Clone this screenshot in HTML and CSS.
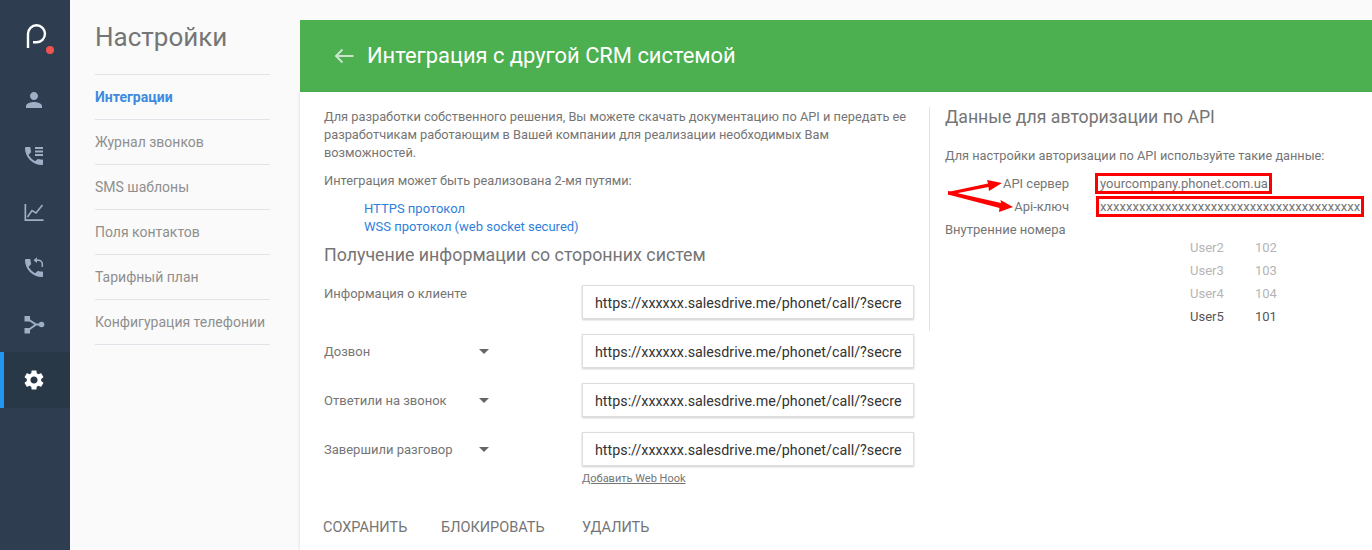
FILE: index.html
```html
<!DOCTYPE html>
<html lang="ru">
<head>
<meta charset="utf-8">
<title>Интеграция с другой CRM системой</title>
<link rel="stylesheet" href="styles.css">
</head>
<body>
<div class="app">
  <nav class="rail">
    <div class="logo">
      <svg width="29" height="31" viewBox="0 0 29 31"><path d="M2 24V9.800A8.500 8.500 0 1 1 10.500 18.300H7" fill="none" stroke="#fff" stroke-width="2.400"/><circle cx="24" cy="26" r="4" fill="#ef5350"/></svg>
    </div>
    <a class="rail-item"><svg class="ico" viewBox="0 0 24 24"><path d="M12 12c2.210 0 4-1.790 4-4s-1.790-4-4-4-4 1.790-4 4 1.790 4 4 4zm0 2c-2.670 0-8 1.340-8 4v2h16v-2c0-2.660-5.330-4-8-4z"/></svg></a>
    <a class="rail-item"><svg class="ico" viewBox="0 0 24 24"><path d="M20 15.500c-1.250 0-2.450-.2-3.570-.57-.35-.11-.74-.03-1.020.24l-2.200 2.200c-2.830-1.440-5.150-3.750-6.590-6.590l2.200-2.210c.28-.26.36-.65.25-1C8.700 6.450 8.500 5.250 8.500 4c0-.55-.45-1-1-1H4c-.55 0-1 .45-1 1 0 9.390 7.610 17 17 17 .55 0 1-.45 1-1v-3.500c0-.55-.45-1-1-1z"/><path d="M13 3h8v2h-8zM13 6.500h8v2h-8zM13 10h8v2h-8z"/></svg></a>
    <a class="rail-item"><svg class="ico" viewBox="0 0 24 24"><path d="M2.500 4h1.700v15.300h17.300V21H2.500z"/><path d="M5.500 17l4.500-6.500 4 2.500 6.500-8" fill="none" stroke="#9fb0c6" stroke-width="1.600"/></svg></a>
    <a class="rail-item"><svg class="ico" viewBox="0 0 24 24"><path d="M20 15.500c-1.250 0-2.450-.2-3.570-.57-.35-.11-.74-.03-1.020.24l-2.200 2.200c-2.830-1.440-5.150-3.750-6.590-6.590l2.200-2.210c.28-.26.36-.65.25-1C8.700 6.450 8.500 5.250 8.500 4c0-.55-.45-1-1-1H4c-.55 0-1 .45-1 1 0 9.390 7.610 17 17 17 .55 0 1-.45 1-1v-3.500c0-.55-.45-1-1-1z"/><path d="M14 4.200h2.500a3.800 3.800 0 0 1 3.800 3.800v3" fill="none" stroke="#9fb0c6" stroke-width="1.500"/><path d="M11.500 4.200l3.500-2.900v5.800z"/></svg></a>
    <a class="rail-item"><svg class="ico" viewBox="0 0 24 24"><path d="M2.500 4h5.500v5.500H2.500zM2.500 16H8v5.500H2.500z"/><circle cx="19.500" cy="12.500" r="2.800"/><path d="M5 6.500l9 6H19M5 19l9-6.500" fill="none" stroke="#9fb0c6" stroke-width="2"/></svg></a>
    <a class="rail-item active"><svg class="ico" viewBox="0 0 24 24"><path d="M19.140 12.940c.04-.3.06-.61.06-.94 0-.32-.02-.64-.07-.94l2.030-1.580c.18-.14.23-.41.12-.61l-1.920-3.320c-.12-.22-.37-.29-.59-.22l-2.390.96c-.5-.38-1.030-.7-1.620-.94l-.36-2.540c-.04-.24-.24-.41-.48-.41h-3.840c-.24 0-.43.17-.47.41l-.36 2.540c-.59.24-1.130.57-1.620.94l-2.390-.96c-.22-.08-.47 0-.59.22L2.740 8.870c-.12.21-.08.47.12.61l2.030 1.580c-.05.3-.09.63-.09.94s.02.64.07.94l-2.030 1.580c-.18.14-.23.41-.12.61l1.920 3.320c.12.22.37.29.59.22l2.390-.96c.5.38 1.030.7 1.620.94l.36 2.540c.05.24.24.41.48.41h3.840c.24 0 .44-.17.47-.41l.36-2.540c.59-.24 1.130-.56 1.620-.94l2.390.96c.22.08.47 0 .59-.22l1.920-3.320c.12-.22.07-.47-.12-.61l-2.010-1.580zM12 15.600c-1.980 0-3.600-1.620-3.600-3.600s1.620-3.600 3.600-3.600 3.600 1.620 3.600 3.600-1.620 3.600-3.600 3.600z"/></svg></a>
  </nav>

  <aside class="side">
    <h1 class="side-title">Настройки</h1>
    <ul class="side-nav">
      <li class="current">Интеграции</li>
      <li>Журнал звонков</li>
      <li>SMS шаблоны</li>
      <li>Поля контактов</li>
      <li>Тарифный план</li>
      <li>Конфигурация телефонии</li>
    </ul>
  </aside>

  <main class="main">
    <header class="banner">
      <svg class="back" width="20" height="16" viewBox="0 0 20 16"><path d="M19.500 8H2M8.500 1.500L2 8l6.500 6.500" fill="none" stroke="#c9e6ca" stroke-width="2"/></svg>
      <h2 class="banner-title">Интеграция с другой CRM системой</h2>
    </header>
    <div class="content">
      <section class="left">
        <p class="para">Для разработки собственного решения, Вы можете скачать документацию по API и передать ее разработчикам работающим в Вашей компании для реализации необходимых Вам возможностей.</p>
        <p class="para para-second">Интеграция может быть реализована 2-мя путями:</p>
        <div class="links">
          <a>HTTPS протокол</a>
          <a>WSS протокол (web socket secured)</a>
        </div>
        <h3 class="sub">Получение информации со сторонних систем</h3>
        <div class="form">
          <div class="row row-top">
            <span class="label">Информация о клиенте</span>
            <div class="field">https://xxxxxx.salesdrive.me/phonet/call/?secre</div>
          </div>
          <div class="row">
            <span class="label">Дозвон<i class="caret"></i></span>
            <div class="field">https://xxxxxx.salesdrive.me/phonet/call/?secre</div>
          </div>
          <div class="row">
            <span class="label">Ответили на звонок<i class="caret"></i></span>
            <div class="field">https://xxxxxx.salesdrive.me/phonet/call/?secre</div>
          </div>
          <div class="row row-last">
            <span class="label">Завершили разговор<i class="caret"></i></span>
            <div class="field">https://xxxxxx.salesdrive.me/phonet/call/?secre</div>
          </div>
          <a class="add-hook">Добавить Web Hook</a>
        </div>
        <div class="actions">
          <a class="act-save">СОХРАНИТЬ</a>
          <a class="act-block">БЛОКИРОВАТЬ</a>
          <a>УДАЛИТЬ</a>
        </div>
      </section>
      <section class="right">
        <svg class="arrows" width="72" height="40" viewBox="0 0 72 40"><path d="M3 17L43 8.500 42 5l15 3-13 8-.5-4L3 20z" fill="#f00"/><path d="M3 16L56 28 55.500 25 68 32 54 37 54.500 33 3 19.500z" fill="#f00"/></svg>
        <h3 class="right-title">Данные для авторизации по API</h3>
        <p class="right-lead">Для настройки авторизации по API используйте такие данные:</p>
        <div class="cred cred-first"><span class="cred-label">API сервер</span><span class="cred-value">yourcompany.phonet.com.ua</span></div>
        <div class="cred"><span class="cred-label">Api-ключ</span><span class="cred-value cred-key">xxxxxxxxxxxxxxxxxxxxxxxxxxxxxxxxxxxxxxxx</span></div>
        <div class="ext-title">Внутренние номера</div>
        <ul class="ext">
          <li class="muted"><span>User2</span><span>102</span></li>
          <li class="muted"><span>User3</span><span>103</span></li>
          <li class="muted"><span>User4</span><span>104</span></li>
          <li><span>User5</span><span>101</span></li>
        </ul>
      </section>
    </div>
  </main>
</div>
</body>
</html>
```
FILE: styles.css
```css
* { box-sizing: border-box; }
html, body { margin: 0; height: 100%; }
body { font-family: Roboto, "Liberation Sans", Arial, sans-serif; color: #757575; background: #fafafa; overflow: hidden; }
h1, h2, h3, p, ul { margin: 0; padding: 0; font-weight: 400; }
ul { list-style: none; }
.app { display: flex; height: 550px; }

.rail { width: 70px; flex: none; background: #2e3e50; display: flex; flex-direction: column; }
.logo { height: 72px; padding: 24px 0 0 26px; }
.rail-item { height: 56px; display: flex; align-items: center; justify-content: center; border-left: 4px solid transparent; padding-right: 6px; }
.ico { width: 24px; height: 24px; fill: #9fb0c6; }
.rail-item.active { background: #283847; border-left-color: #2196f3; }
.rail-item.active .ico { fill: #fff; }

.side { width: 230px; flex: none; padding: 0 30px 0 25px; background: #fafafa; }
.side-title { font-size: 26px; line-height: 30px; padding-top: 22px; height: 74px; color: #757575; }
.side-nav { border-top: 1px solid #e0e3e7; }
.side-nav li { height: 45px; line-height: 44px; font-size: 14px; color: #8f8f8f; border-bottom: 1px solid #e0e3e7; }
.side-nav .current { color: #3d8ae0; font-weight: 700; }

.main { flex: 1; padding-top: 20px; display: flex; flex-direction: column; min-width: 0; }
.banner { height: 72px; flex: none; background: #4caf50; display: flex; align-items: center; padding: 0 0 1px 34px; }
.back { flex: none; margin-right: 13px; }
.banner-title { font-size: 21.900px; color: #fff; }
.content { flex: 1; background: #fff; display: flex; box-shadow: -1px 0 2px rgba(0,0,0,.08); }

.left { width: 629px; flex: none; padding: 16px 15px 0 24px; }
.para { font-size: 12.800px; line-height: 18px; color: #757575; }
.para-second { margin-top: 10px; }
.links { display: flex; flex-direction: column; margin: 10px 0 0 40px; font-size: 13px; line-height: 18px; color: #2f7fdb; }
.sub { font-size: 17.800px; line-height: 24px; margin-top: 7px; color: #757575; }
.form { margin-top: 18px; }
.row { display: flex; justify-content: space-between; align-items: center; height: 34px; margin-bottom: 15px; }
.row-top { align-items: flex-start; }
.row-top .label { line-height: 18px; }
.row-last { margin-bottom: 0; }
.label { font-size: 13px; color: #757575; width: 258px; display: flex; align-items: center; }
.caret { margin-left: auto; margin-right: 93px; width: 0; height: 0; border: 5px solid transparent; border-top: 5px solid #666; border-bottom: 0; }
.field { width: 332px; height: 34px; flex: none; background: #fff; border: 1px solid #ddd; box-shadow: 0 1px 2px rgba(0,0,0,.2); padding: 0 12px; line-height: 34px; font-size: 14.300px; color: #333; overflow: hidden; white-space: nowrap; }
.add-hook { display: block; margin: 6px 0 0 258px; font-size: 11px; line-height: 14px; color: #757575; text-decoration: underline; }
.actions { display: flex; margin-top: 32px; font-size: 14.500px; line-height: 20px; color: #757575; margin-left: -1px; }
.act-save { width: 118px; }
.act-block { width: 141px; }

.right { flex: 1; position: relative; min-width: 0; height: 224px; margin-top: 15px; border-left: 1px solid #e3e3e3; padding-left: 15px; }
.arrows { position: absolute; left: 15px; top: 68px; }
.right-title { font-size: 17.700px; line-height: 20px; color: #757575; }
.right-lead { font-size: 12.750px; line-height: 16px; margin-top: 21px; color: #757575; }
.cred { display: flex; height: 23px; align-items: center; font-size: 13px; color: #757575; }
.cred-first { margin-top: 8px; }
.cred-label { width: 124px; text-align: right; flex: none; }
.cred-value { margin-left: 26px; border: 3px solid #f00; height: 21px; line-height: 15px; padding: 0 2px; width: 177px; white-space: nowrap; }
.cred-key { width: 268px; margin-left: 27px; padding: 0 1px; letter-spacing: .06px; }
.ext-title { font-size: 13px; line-height: 16px; margin-top: 4px; }
.ext { margin: -2px 0 0 245px; font-size: 13px; color: #555; }
.ext li { height: 23px; line-height: 23px; display: flex; }
.ext li span:first-child { width: 65px; }
.ext .muted { color: #b5b5b5; }
```
